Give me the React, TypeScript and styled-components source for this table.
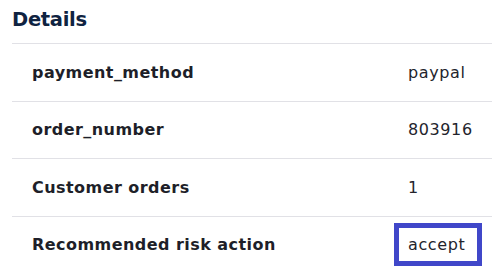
import { FC } from "react";
import styled, { createGlobalStyle } from "styled-components";

const GlobalStyle = createGlobalStyle`
  html, body {
    margin: 0;
    padding: 0;
    background: #ffffff;
    overflow: hidden;
  }
  body {
    font-family: "DejaVu Sans", "Open Sans", sans-serif;
  }
`;

const Card = styled.section`
  padding: 8px 0 0 12px;
`;

const Title = styled.h2`
  margin: 0;
  padding-bottom: 11px;
  font-size: 19.5px;
  line-height: 24px;
  font-weight: 700;
  letter-spacing: -0.3px;
  color: #0f2341;
  border-bottom: 1px solid #e1e1e6;
`;

const Table = styled.table`
  width: 480px;
  border-collapse: collapse;
`;

const Row = styled.tr<{ $last?: boolean }>`
  border-bottom: ${(p) => (p.$last ? "none" : "1px solid #e1e1e6")};
`;

const Label = styled.td`
  width: 360px;
  height: 56.5px;
  padding: 0 0 0 20px;
  font-size: 16px;
  font-weight: 700;
  letter-spacing: 0.45px;
  color: #1e1f29;
  vertical-align: middle;
`;

const Value = styled.td`
  padding: 0 0 0 16px;
  font-size: 16px;
  font-weight: 400;
  letter-spacing: 0.6px;
  color: #23242c;
  vertical-align: middle;
`;

const Highlight = styled.span`
  display: inline-block;
  margin-left: -14px;
  padding: 7px 12px 7px 9px;
  border: 5px solid #4047c9;
  line-height: 19px;
`;

const rows = [
  { label: "payment_method", value: "paypal" },
  { label: "order_number", value: "803916" },
  { label: "Customer orders", value: "1" },
  { label: "Recommended risk action", value: "accept", marked: true },
];

const App: FC = () => {
  return (
    <>
      <GlobalStyle />
      <Card>
        <Title>Details</Title>
        <Table>
          <tbody>
            {rows.map((r, i) => (
              <Row key={r.label} $last={i === rows.length - 1}>
                <Label>{r.label}</Label>
                <Value>{r.marked ? <Highlight>{r.value}</Highlight> : r.value}</Value>
              </Row>
            ))}
          </tbody>
        </Table>
      </Card>
    </>
  );
};

export default App;
